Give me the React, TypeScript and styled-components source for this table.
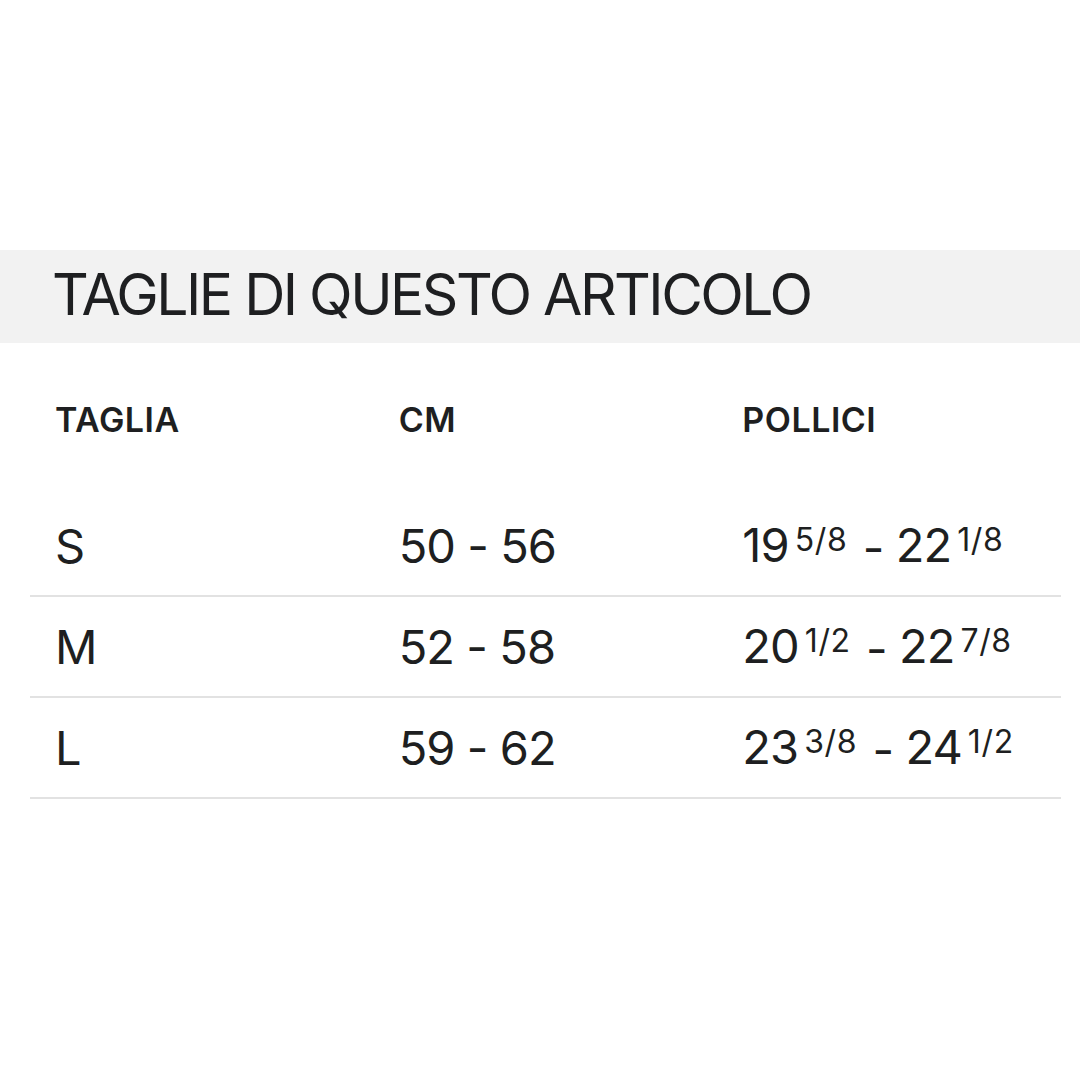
import React from "react";
import styled, { createGlobalStyle } from "styled-components";

const Global = createGlobalStyle`
  html, body { margin: 0; padding: 0; background: #ffffff; }
  body { font-family: Inter, "Liberation Sans", Arial, sans-serif; color: #1e1f21; }
`;

const Page = styled.div`
  width: 1080px;
  height: 1080px;
  padding-top: 250px;
  box-sizing: border-box;
`;

const TitleBand = styled.div`
  height: 93px;
  background: #f2f2f2;
  display: flex;
  align-items: center;
  padding: 0 0 4px 52px;
  box-sizing: border-box;
`;

const Title = styled.h1`
  margin: 0;
  font-size: 57px;
  font-weight: 400;
  line-height: 1;
  letter-spacing: -0.044em;
  color: #1e1f21;
`;

const Table = styled.div`
  margin: 0 19px 0 30px;
`;

const Row = styled.div<{ $header?: boolean }>`
  display: grid;
  grid-template-columns: repeat(3, 1fr);
  align-items: center;
  box-sizing: border-box;
  height: ${(p) => (p.$header ? "153px" : "101px")};
  border-bottom: ${(p) => (p.$header ? "none" : "2px solid #e2e2e2")};
`;

const HeadCell = styled.div`
  padding-left: 25px;
  font-size: 34px;
  font-weight: 600;
  line-height: 1;
  letter-spacing: 0.015em;
`;

const Cell = styled.div`
  padding-left: 25px;
  font-size: 47px;
  font-weight: 400;
  line-height: 1;
  letter-spacing: -0.02em;
  white-space: nowrap;
`;

const Frac = styled.sup`
  font-size: 32px;
  vertical-align: 11px;
  line-height: 0;
  margin-left: 6px;
  letter-spacing: 0.02em;
`;

const Dash = styled.span`
  vertical-align: -3px;
  margin-left: 3px;
`;

type Inch = { whole: string; frac: string };

const rows: { size: string; cm: string; from: Inch; to: Inch }[] = [
  { size: "S", cm: "50 - 56", from: { whole: "19", frac: "5/8" }, to: { whole: "22", frac: "1/8" } },
  { size: "M", cm: "52 - 58", from: { whole: "20", frac: "1/2" }, to: { whole: "22", frac: "7/8" } },
  { size: "L", cm: "59 - 62", from: { whole: "23", frac: "3/8" }, to: { whole: "24", frac: "1/2" } },
];

const InchValue = ({ v }: { v: Inch }) => (
  <>
    {v.whole}
    <Frac>{v.frac}</Frac>
  </>
);

export default function App() {
  return (
    <Page>
      <Global />
      <TitleBand>
        <Title>TAGLIE DI QUESTO ARTICOLO</Title>
      </TitleBand>
      <Table>
        <Row $header>
          <HeadCell>TAGLIA</HeadCell>
          <HeadCell>CM</HeadCell>
          <HeadCell>POLLICI</HeadCell>
        </Row>
        {rows.map((r) => (
          <Row key={r.size}>
            <Cell>{r.size}</Cell>
            <Cell>{r.cm}</Cell>
            <Cell>
              <InchValue v={r.from} /> <Dash>-</Dash> <InchValue v={r.to} />
            </Cell>
          </Row>
        ))}
      </Table>
    </Page>
  );
}
